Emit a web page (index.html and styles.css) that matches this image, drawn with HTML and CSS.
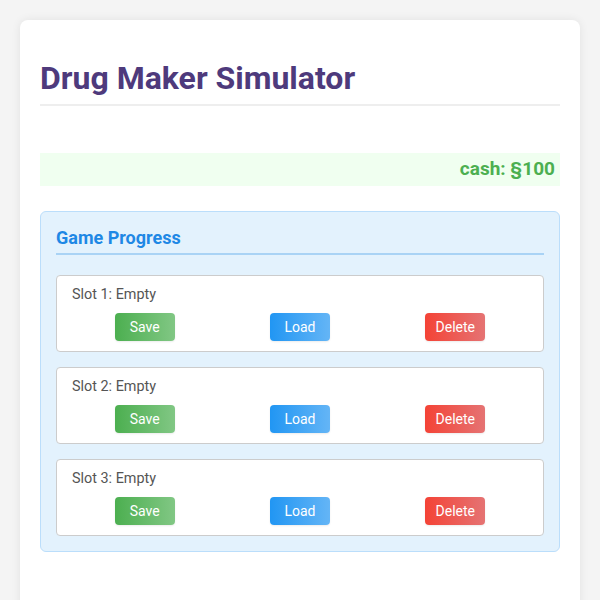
FILE: index.html
```html
<!DOCTYPE html>
<html>
<head>
<meta charset="utf-8">
<link rel="stylesheet" href="styles.css">
</head>
<body>
<div class="card">
  <h1 class="title">Drug Maker Simulator</h1>
  <div class="cash-bar"><span class="cash">cash: §100</span></div>
  <div class="panel">
    <h2 class="panel-title">Game Progress</h2>
    <div class="slot">
      <div class="slot-name">Slot 1: Empty</div>
      <div class="slot-actions">
        <button class="btn btn-save">Save</button>
        <button class="btn btn-load">Load</button>
        <button class="btn btn-delete">Delete</button>
      </div>
    </div>
    <div class="slot">
      <div class="slot-name">Slot 2: Empty</div>
      <div class="slot-actions">
        <button class="btn btn-save">Save</button>
        <button class="btn btn-load">Load</button>
        <button class="btn btn-delete">Delete</button>
      </div>
    </div>
    <div class="slot">
      <div class="slot-name">Slot 3: Empty</div>
      <div class="slot-actions">
        <button class="btn btn-save">Save</button>
        <button class="btn btn-load">Load</button>
        <button class="btn btn-delete">Delete</button>
      </div>
    </div>
  </div>
</div>
</body>
</html>
```
FILE: styles.css
```css
html, body {
  margin: 0;
  padding: 0;
}
body {
  background: #f4f4f4;
  font-family: Roboto, "Liberation Sans", sans-serif;
  padding: 20px 20px 0;
  height: 600px;
  box-sizing: border-box;
  overflow: hidden;
}
.card {
  background: #ffffff;
  border-radius: 8px;
  box-shadow: 0 0 10px rgba(0,0,0,0.08);
  padding: 20px;
  min-height: 700px;
}
.title {
  font-size: 32px;
  font-weight: 700;
  color: #4e3a7c;
  margin: 20px 0 0;
  padding-bottom: 8px;
  border-bottom: 2px solid #eeeeee;
  line-height: 36px;
}
.cash-bar {
  margin-top: 47px;
  background: #f0fff0;
  text-align: right;
  padding: 5px 5px;
  line-height: 22px;
}
.cash {
  color: #4caf50;
  font-size: 19px;
  font-weight: 700;
}
.panel {
  margin-top: 25px;
  background: #e3f2fd;
  border: 1px solid #bbdefb;
  border-radius: 6px;
  padding: 15px;
}
.panel-title {
  margin: 0 0 20px;
  font-size: 18px;
  font-weight: 700;
  color: #1e88e5;
  line-height: 21px;
  padding-bottom: 5px;
  border-bottom: 2px solid #a9d3f5;
}
.slot {
  background: #ffffff;
  border: 1px solid #cccccc;
  border-radius: 4px;
  padding: 10px;
  margin-bottom: 15px;
}
.slot:last-child {
  margin-bottom: 0;
}
.slot-name {
  padding: 0 5px;
  font-size: 14.4px;
  line-height: 17px;
  color: #555555;
  margin-bottom: 10px;
}
.slot-actions {
  display: flex;
  justify-content: space-around;
}
.btn {
  width: 60px;
  height: 28px;
  border: none;
  border-radius: 4px;
  color: #ffffff;
  font-family: Roboto, "Liberation Sans", sans-serif;
  font-size: 14px;
  padding: 0;
  box-shadow: 0 1px 2px rgba(0,0,0,0.08);
}
.btn-save {
  background: linear-gradient(to right, #4caf50, #81c784);
}
.btn-load {
  background: linear-gradient(to right, #2196f3, #64b5f6);
}
.btn-delete {
  background: linear-gradient(to right, #f44336, #e57373);
}
```
